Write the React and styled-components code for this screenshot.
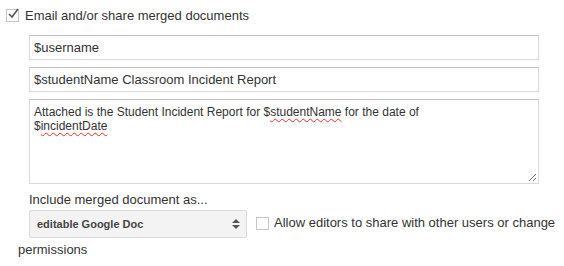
import React from "react";
import styled, { createGlobalStyle } from "styled-components";

const Global = createGlobalStyle`
    body {
        margin: 0;
        background: #fff;
        font-family: "Liberation Sans", Arial, sans-serif;
        font-size: 13px;
        color: #333;
    }
`;

const Wrapper = styled.div`
    width: 564px;
    height: 266px;
    padding-top: 7px;
    box-sizing: border-box;
    overflow: hidden;
`;

const Header = styled.label`
    display: flex;
    align-items: center;
    gap: 6px;
    padding-left: 6px;
    height: 16px;
`;

const Box = styled.span`
    display: inline-block;
    position: relative;
    width: 11px;
    height: 11px;
    border: 1px solid #c6c6c6;
    background: #fff;
    flex: none;
`;

const Tick = () => (
    <svg width="13" height="13" viewBox="0 0 13 13" style={{ position: "absolute", left: 0, top: -3 }}>
        <path d="M2 7 L5 10 L11 2" fill="none" stroke="#555" strokeWidth="1.6" />
    </svg>
);

const Fields = styled.div`
    padding-left: 29px;
    width: 510px;
    display: flex;
    flex-direction: column;
    gap: 7px;
    margin-top: 12px;
`;

const Field = styled.div`
    border: 1px solid #d9d9d9;
    border-top-color: #c0c0c0;
    padding: 0 4px;
    display: flex;
    align-items: center;
    box-sizing: border-box;
    height: 25px;
`;

const Area = styled.div`
    position: relative;
    height: 85px;
    border: 1px solid #d9d9d9;
    border-top-color: #c0c0c0;
    padding: 5px 4px;
    font-size: 12px;
    line-height: 14px;
    box-sizing: border-box;
`;

const Spell = styled.span`
    text-decoration: underline wavy #e0332b;
    text-decoration-thickness: 1px;
    text-underline-offset: 2px;
`;

const Grip = () => (
    <svg width="9" height="9" viewBox="0 0 9 9" style={{ position: "absolute", right: 1, bottom: 1 }}>
        <path d="M8 1 L1 8 M8 5 L5 8" stroke="#777" strokeWidth="1" />
    </svg>
);

const Caption = styled.div`
    padding-left: 29px;
    margin-top: 8px;
    height: 16px;
`;

const Bottom = styled.div`
    padding-left: 18px;
    margin-top: 2px;
    line-height: 23px;
`;

const Select = styled.span`
    display: inline-flex;
    align-items: center;
    justify-content: space-between;
    vertical-align: middle;
    margin-left: 11px;
    margin-right: 9px;
    width: 218px;
    height: 28px;
    box-sizing: border-box;
    padding: 0 6px 0 7px;
    background: #f3f3f3;
    border: 1px solid #dcdcdc;
    border-radius: 2px;
    font-size: 11px;
    line-height: 1;
    font-weight: bold;
    color: #444;
`;

const Arrows = () => (
    <svg width="8" height="12" viewBox="0 0 8 12">
        <path d="M0 5 L4 1 L8 5 Z M0 7 L4 11 L8 7 Z" fill="#555" />
    </svg>
);

const SmallBox = styled(Box)`
    vertical-align: middle;
    margin-right: 5px;
    top: -1px;
`;

export default () => {
    return (
        <Wrapper>
            <Global />
            <Header>
                <Box><Tick /></Box>
                Email and/or share merged documents
            </Header>
            <Fields>
                <Field>$username</Field>
                <Field>$studentName Classroom Incident Report</Field>
                <Area>
                    Attached is the Student Incident Report for $<Spell>studentName</Spell> for the date of
                    <br />
                    $<Spell>incidentDate</Spell>
                    <Grip />
                </Area>
            </Fields>
            <Caption>Include merged document as...</Caption>
            <Bottom>
                <Select>
                    editable Google Doc
                    <Arrows />
                </Select>
                <SmallBox />
                Allow editors to share with other users or change permissions
            </Bottom>
        </Wrapper>
    );
};
